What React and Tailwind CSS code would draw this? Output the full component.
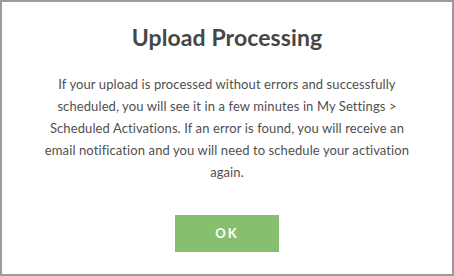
export default function App() {
  return (
    <div className="w-[454px] h-[276px] bg-white border-2 border-[#9b9b9b] flex flex-col items-center" style={{ fontFamily: "Lato, 'Open Sans', sans-serif" }}>
      <h1 className="mt-[21px] text-[23px] leading-[28px] font-bold text-[#464646] tracking-[0.1px]">Upload Processing</h1>
      <p className="mt-[22px] text-[13px] leading-[22px] text-[#505050] text-center font-normal tracking-[0.1px]">
        If your upload is processed without errors and successfully<br />
        scheduled, you will see it in a few minutes in My Settings &gt;<br />
        Scheduled Activations. If an error is found, you will receive an<br />
        email notification and you will need to schedule your activation<br />
        again.
      </p>
      <button className="mt-[32px] w-[104px] h-[37px] bg-[#86bf6e] text-white text-[13px] font-bold tracking-[2px] flex items-center justify-center">OK</button>
    </div>
  );
}
